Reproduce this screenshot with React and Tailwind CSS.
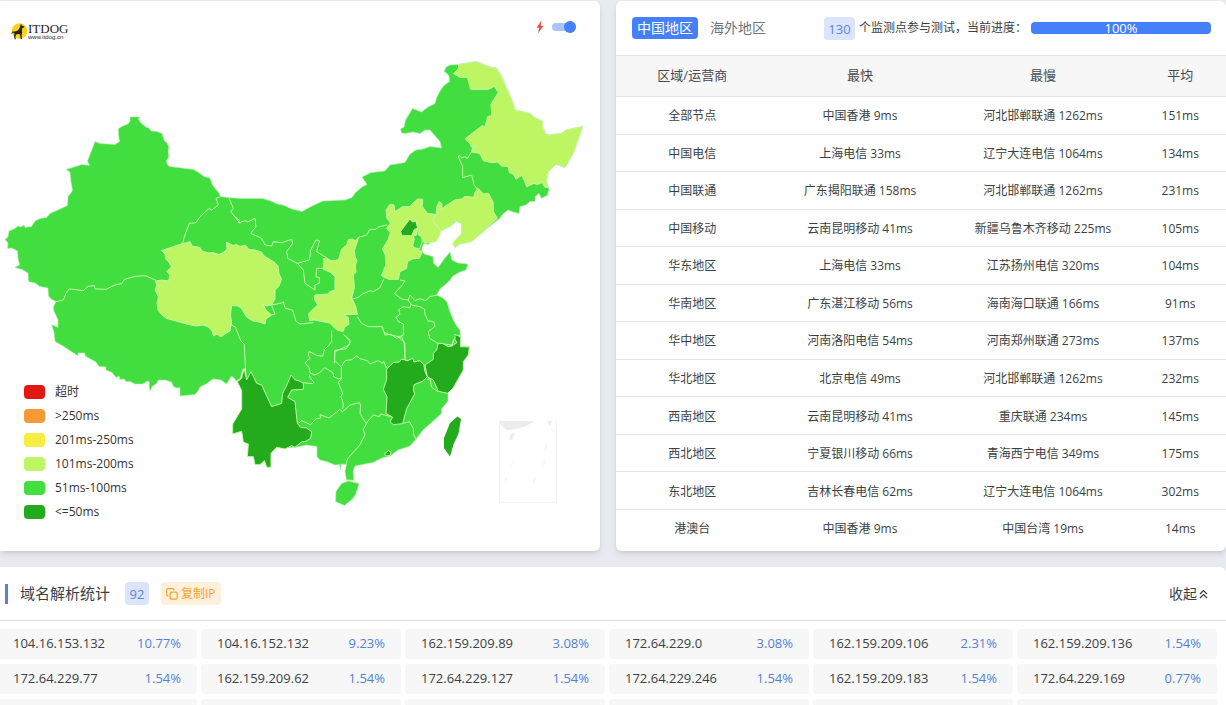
import React, { useState } from 'react'

const legend = [
    { label: "超时", box: "bg-[#e41813]" },
    { label: ">250ms", box: "bg-[#f59a36]" },
    { label: "201ms-250ms", box: "bg-[#f6ec43]" },
    { label: "101ms-200ms", box: "bg-[#bef663]" },
    { label: "51ms-100ms", box: "bg-[#42dd3f]" },
    { label: "<=50ms", box: "bg-[#24aa1d]" },
]

const regions = [
    ["全部节点", "中国香港 9ms", "河北邯郸联通 1262ms", "151ms"],
    ["中国电信", "上海电信 33ms", "辽宁大连电信 1064ms", "134ms"],
    ["中国联通", "广东揭阳联通 158ms", "河北邯郸联通 1262ms", "231ms"],
    ["中国移动", "云南昆明移动 41ms", "新疆乌鲁木齐移动 225ms", "105ms"],
    ["华东地区", "上海电信 33ms", "江苏扬州电信 320ms", "104ms"],
    ["华南地区", "广东湛江移动 56ms", "海南海口联通 166ms", "91ms"],
    ["华中地区", "河南洛阳电信 54ms", "河南郑州联通 273ms", "137ms"],
    ["华北地区", "北京电信 49ms", "河北邯郸联通 1262ms", "232ms"],
    ["西南地区", "云南昆明移动 41ms", "重庆联通 234ms", "145ms"],
    ["西北地区", "宁夏银川移动 66ms", "青海西宁电信 349ms", "175ms"],
    ["东北地区", "吉林长春电信 62ms", "辽宁大连电信 1064ms", "302ms"],
    ["港澳台", "中国香港 9ms", "中国台湾 19ms", "14ms"],
]

const ips = [
    ["104.16.153.132", "10.77%"],
    ["104.16.152.132", "9.23%"],
    ["162.159.209.89", "3.08%"],
    ["172.64.229.0", "3.08%"],
    ["162.159.209.106", "2.31%"],
    ["162.159.209.136", "1.54%"],
    ["172.64.229.77", "1.54%"],
    ["162.159.209.62", "1.54%"],
    ["172.64.229.127", "1.54%"],
    ["172.64.229.246", "1.54%"],
    ["162.159.209.183", "1.54%"],
    ["172.64.229.169", "0.77%"],
    ["", ""], ["", ""], ["", ""], ["", ""], ["", ""], ["", ""],
]

const FAST = "#24aa1d"
const GOOD = "#42dd3f"
const SLOW = "#bef663"

const Logo = () => (
    <div className="flex items-center">
        <svg viewBox="0 0 18 18" className="w-[18px] h-[18px]">
            <circle cx="9.5" cy="9" r="7.8" fill="#fbd316" />
            <path d="M11 1.500l.8 2 2.600.9-.4 1.200-1.800.3-.2 2.300.1 2.500-.5 2.500.4 3.800h-1.300l-.7-4.400-1.400-.6-2 .2-1.300 1.900.6 3.200H4.700l-.7-3.600.5-2.400-1.700-.9-.9 1.700-.6-.3 1.200-2.400 2.300.2 3.200-1.100 1.500-2.600z" fill="#26211c" />
        </svg>
        <div className="leading-none text-[#2b2623]">
            <div className="font-['Liberation_Serif',serif] text-[13px] leading-[11px]">ITDOG</div>
            <div className="font-['Liberation_Sans',sans-serif] text-[6px] leading-[6px]">www.itdog.cn</div>
        </div>
    </div>
)

const ChinaMap = () => (
    <svg viewBox="0 51 600 500" className="block w-full" stroke="#c5f8a8" strokeWidth="1" strokeLinejoin="round" fill="none">
        {/* mainland, clockwise from 阿勒泰 */}
        <path
            fill={GOOD}
            stroke="#b4f2ae"
            strokeWidth=".6"
            d="M130 117 L139.500 117 L138.500 119.500 L141 123 L146.500 127.500 L149 128 L151 131 L157 131.500 L162 133.500 L163 137 L164.500 141 L167 143 L169 147 L168 151 L169 156 L166.500 161 L167 164 L169.500 166.500 L193.500 169.500 L198 172 L204 176.500 L210 178 L212 184 L215 188.500 L219 193 L220.500 196.500
            L228 197.500 L240 198.500 L263 198.500 L272 201.500 L277 204 L283 205 L292 209 L302 211.500 L312 206 L323 201 L345 200 L352 197.500 L355 193 L362 187 L367 184.500 L362 177 L371 172.500 L380 171.500 L385 171 L390 165 L396 164 L405 162.500 L410 154 L416 150 L423 149 L430 146.500 L441.500 148 L440 141.500 L433 133.500 L430 130 L425 130 L420 133.500 L413 132 L405 133.500 L401.500 133 L400.500 129 L404 127 L405.500 120 L412.500 108.500 L421.500 112 L428 107 L435 103.500 L436.500 98 L440 91 L443.500 86 L449.500 81.500 L449 76 L446 72.500 L444 72 L446 67 L450 65 L458 64.500
            L476.500 61.500 L488 66.500 L496.500 68 L502.500 78.500 L506.500 88.500 L513 103 L515 110 L530 113.500 L534 117 L540 120 L542 121 L542 126 L545 132.500 L547.500 135 L561.500 133.500 L566 130 L573 128.500 L582.500 126.500 L580 135 L577 143 L573 153.500 L570 159 L565 167.500 L556 164.500 L548 171.500 L546.500 181 L549 189.500 L547.500 195 L541.500 198.500 L539 193.500 L535 196.500 L535 201.500 L530 201.500 L526 205 L520 206.500 L519 213.500 L513 212 L508 210 L503 214 L498.500 219.500 L495 222
            L480 234.500 L471.500 241.500 L460 244 L455 247.500 L452.500 243.500 L461.500 233.500 L461.500 223.500 L456.500 221 L450 226.500 L440 231.500 L435 240 L428 244.500 L423.500 243.500 L421.500 250 L424 254 L433 256.500 L433.500 263 L438 267.500 L445 258 L450 252 L452 260 L458 263 L468 264 L466 270 L460 272 L453 276 L450 280 L446 284 L440.500 288.500 L436.500 295 L443 298 L447 302 L450 312 L453.500 320 L456 325 L460 330
            L460.500 338 L461 346.500 L469.500 346.500 L468 355 L463.500 361.500 L463 370 L458 379 L453 388 L448 393 L448 401 L441.500 409 L441.500 413.500 L436.500 418 L423 430 L416 439 L410 446 L398 450 L390 456 L382 458 L373 462.500 L365 464 L355 466 L353 471.500 L354 480 L346.500 480.500 L345 471.500 L346.500 464.500 L341 464 L340.500 470 L339.500 464.500 L335 465 L326.500 461.500 L320 460 L317 456.500 L317 446.500 L306.500 445 L295 447.500
            L276.500 447.500 L260 440 L250 420 L246 385 L243 369 L240 379 L236 381 L235 379 L231.500 376 L229 380 L226.500 384 L221 380 L213 379 L206 384 L200 387 L198 391 L195 394.500 L180 396 L180 387.500 L177 388 L173.500 386.500 L171.500 382 L165 380 L158.500 380 L156 384 L152 386.500 L150 391 L149 386 L149.500 382 L147.500 381 L143 384 L135 384 L130 381.500 L126 381.500 L124 379 L120 379.500 L119 376 L116 377.500 L112 372.500 L106 370 L106 367 L99 366.500 L96 362 L85 356 L85 353 L78 353 L78 356 L72 352 L63 346 L55 341.500 L54 332 L51.500 325 L55 326 L58 327.500 L58 320 L53.500 310 L53.500 306.500 L56 301.500
            L51 299 L48.500 296 L48 288 L40 286.500 L35 283 L28.500 281.500 L28 273 L22 269.500 L15 267.500 L19.500 265 L18 258 L17.500 251 L12 248 L7.500 248.500 L8 243 L5 239.500 L8 237 L9 231 L14 229 L18 226 L21 227 L24 225 L25 227.500 L31.500 226.500 L35 221 L40 218.500 L46.500 217.500 L50 213.500 L60 209 L67.500 205.500 L68 196.500 L71 193 L72.500 190 L71 182 L70 172 L66 169.500 L82 164.500 L89.500 165.500 L87.500 161 L91 152 L95 141.500 L100 143.500 L115 144.500 L119.500 141.500 L118.500 135 L118.500 128.500 L123 126 L128 124 L130 121 Z"
        />

        {/* 青海 */}
        <path fill={SLOW} d="M161.500 250.500 L168 248.500 L182.500 243.500 L186 243 L190 241.500 L192 246 L200 247.500 L202 251 L208 253 L213 252.500 L219 254.500 L224 252 L227 249 L226.500 242 L233 245.500 L236 244.500 L240 246.500 L245 245 L249 249.500 L255 250 L261.500 252 L264 256 L270 259.500 L274 262 L278 266 L279 274 L281.500 279 L279 286 L275 290 L275 299 L271.500 305 L266 306 L263 303.500 L266 310 L271.500 315 L266 319 L265 324 L259 322 L253 321 L246.500 317 L241.500 308.500 L238 306 L231.500 305.500 L230.500 315 L231.500 322 L230 331 L224 334.500 L221 337 L217 334 L213.500 336 L212 331 L208.500 327 L203 325 L196 326 L186.500 324 L176 321 L166.500 318.500 L162 315 L158 310 L157 303 L158.500 297 L155 290 L157 285 L155 281 L162 280 L168.500 281 L170 275 L166.500 271.500 L171.500 267 L168 261 L165.500 259 L165 254 Z" />

        {/* north-west borders */}
        <g transform="translate(0 100) scale(.33333)" strokeWidth="3">
            <path d="M168 605l22-5 8-20 9-13 22 2 21 3 14-13 19-2 2 10 33 1 27-13 20-4 9-13 32-9 30-2 32 14" />
            <path d="M548 430l5-20 15-40 20-2 12-18 28-25 7 5 20-15-7-20 14-5M685 290l15 35-8 10 28 35" />
        </g>

        <g transform="translate(220 180) scale(.33333)" strokeWidth="3">
            {/* 甘肃 / 宁夏 */}
            <path d="M38 103l20 18-2 8 19-7 8 4 22-11 3 25-16 20 33 15 10 20 20 3 5-13 25 3 30-10 3 12-18 25 3 20 29 15 36-10 4-30 16-30 10 2-8 33 40 25M232 250l18 20 5 40 30 20v-15l13-5v-17l-10-3 2-25 22 0" />
            {/* 陕西 */}
            <path fill={SLOW} d="M416 172l-11 10-8-5-12 2-5 16-15 12-10 33-20 2-24-7-1 33 20 8 15 14v40l-16 5-4 7-40 3-2 12 10 18-10 9-17 16 3 22 14-2 46 9 20 20 20 6 5-14 13-8-2-20-14-9 41-1-5-25-12-24 8-30-3-42 8-4-2-22 5-14-6-12-2-18z" />
            {/* 河北 */}
            <path fill={SLOW} d="M510 73 L498 90 L501 115 L511 129 L500 146 L511 158 L504 180 L487 207 L496 225 L497 256 L484 287 L506 298 L535 298 L540 275 L560 265 L562 245 L580 236 L598 235 L607 216 L582 202 L590 180 L600 172 L615 190 L648 185 L660 165 L662 152 L640 125 L645 103 L622 100 L607 80 L608 58 L593 57 L577 71 L570 80 L548 80 L525 95 L522 75 Z" />
            <path fill={FAST} d="M570 117l-10 13-18 24 3 13h30l7-17 11-7-6-20-10 3z" />
            <path fill={GOOD} d="M592 150l-2 15-10 3 3 9-5 20 6 6 15 4 8-23-2-14-9-5 1-15z" />
            <path d="M416 172l24-7 10-17 18 0 7-7 26-6M395 358l20-6 12-10 13-5 10-5 10 3 20-12 12-28M155 405l10-3-8-20-2-7 30-6 5-4 5 19 23 7 10 33 12 8 40-4M30 433l15 7 18 43 10 10 2 47 3 50" />
            {/* 山东 / 江苏 / 安徽 / 河南 */}
            <path d="M540 300l15 3-10 15-22 22 22 17 20 3 5-15 15 17 14-6 18 6 12-12 23-5M565 360l10 15 25 5 14 8 0 12 11 25 5-3 12 5 3 12-20 16 4 20 25 15 42 5 8-20 16-10M565 360l8 14-3 9-20-3-14 9 4 14-12 9 8 13 14 7v34l-15 4 20 20 0 45" />
            <path d="M412 410l13 20 20 10 43 0 2 15 15 8 30 7M370 463l20 17-2 15-43 20-2 35" />
        </g>

        <g transform="translate(380 50) scale(.33333)" strokeWidth="3">
            {/* 辽宁 */}
            <path fill={SLOW} d="M178 455l-8 15-1 20-10 22 23 31 28-13 15-17 20 7v30l-27 30 7 12 15-10 35-7 25-22 52-48-12-20-1-30-14-25-15 2-16-17-9 12-4 15-26-3-10 8-20 3-32 20-6 8-2-18z" />
            {/* 黑龙江 */}
            <path fill={SLOW} d="M235 43 L290 35 L325 50 L350 55 L368 85 L380 115 L400 160 L405 180 L450 190 L462 202 L480 210 L487 213 L487 228 L495 248 L502 255 L545 250 L558 240 L580 235 L608 230 L600 255 L580 310 L555 352 L528 343 L505 365 L500 393 L503 412 L496 413 L485 398 L472 404 L462 400 L440 410 L433 392 L425 376 L408 388 L400 372 L388 368 L385 350 L365 348 L352 336 L335 338 L310 332 L299 310 L275 306 L276 298 L290 288 L275 292 L271 283 L256 266 L308 226 L313 235 L323 200 L335 196 L333 162 L355 128 L343 109 L325 118 L272 118 L262 82 L240 82 L221 71 L236 55 Z" />
            <path d="M275 305l-13 20-8-5-9 4-8-8-2 5 13 29 0 33 27-8 7 28 10 15" />
            <path d="M275 291l13-4 0 4-12 3" fill={GOOD} />
        </g>

        <g transform="translate(220 330) scale(.33333)" strokeWidth="3">
            {/* 云南 */}
            <path fill={FAST} d="M52 155l13-10 7-30 8 35 13-25 17 35 15 5 30 65 30-10 3-30 15-30 10-25 13 15 12 3 12 7v18l-35 2-12 22 22 13 7 65 10 12 18 2 15 11-3 20-17 10-10 0-20 17-10-5-20 10-25-5-17 18v42h-13l-7-20-13 12h-15l-5-24h-18l3-38-15-5-5-33-27 8v-30l27-45v-55z" />
            {/* 江西 */}
            <path fill={FAST} d="M500 117l20-19 18-2 7-9 18 5 15-7 4 11 18-4 12 13 2 17 8 18-13 13-27 11-2 14 4 14-24 44-12 45-28 3-10-9 8-13-20-12 3-50-11-22 10-30z" />
            {/* 浙江 / 上海 */}
            <path fill={FAST} d="M655 40l-5 20-10 10v18l-25 17 7 35 18 10 15 34 28 6 17-17 30-53v-25l15-20 3-24-27-1 1-29-17-8 0 16 6 9-11 7-15 5-18-10z" />
            <path d="M622 148l8-2 5 26 18 13M683 50l14-2 3-20" />
            {/* 重庆 / 贵州 / 湖南 */}
            <path d="M335 2l0 33-10 12-12 12-5 20-18-3-23-12-2 13 6 7-16 14 12 15 3 15 12 7 15-5 17-17 25 15 2 12 15 7 8-3v-33l-20-20v-30l35-5 12-20-17-20M268 133l2 10 12 14-5 4-27-3M365 145l-10 12 13 33-5 10 7 22-2 16M365 108l10-16 20-3 15-11 10 8 22 6 8 10 25-10 12 8 4-6 9 21" />
            <path d="M490 0l5 15 18-2 17 12 15-5 8 20 2 50 10 2" />
            {/* 两广 */}
            <path d="M235 280l10-8 27 12 15-17 15-3-2-10 27 10 23-18 9-7 9 6 22-20 28-7 4 7-2 25 18 30 22-25 18 5 4-8 30 8M440 280l-10 18 5 17-17 32-20 22-15 17-5 16M550 280l18-5 12 20 1 20 9 15M378 450l27 2" />
            <path fill={FAST} d="M495 370l10-8 8 5-2 8-11 3-5-2z" />
        </g>

        {/* 海南 / 台湾 */}
        <path fill={GOOD} stroke="#b4f2ae" strokeWidth=".6" d="M336 491.500l5.500-8 7-2.500 10.500 2.500-3 10-3 5-8.500 7-9-4z" />
        <path fill={FAST} stroke="none" d="M457.500 416.500l3.500 2.500-2.500 14.500-5 11-3.500 12-6-8.500v-10l6-15z" />

        {/* 南海诸岛 */}
        <g stroke="#f5f5f5">
            <path d="M499.500 420v83M556.500 420v83M499 502.500h58" />
            <path fill="#ececec" stroke="none" d="M500 421h35c-8 5-16 9-29 9l-6-6zM547 421h5l-2 5zM511 434l4-1-3 7-3-1z" />
            <path d="M546 445l-1 6M545 461l-2 4M536 478l-3 5M513 463l-2 2M506 478l0 3M552 430l1 2M522 493l1 1" strokeWidth="1.500" />
        </g>
    </svg>
)

const App = () => {
    const [fast, setFast] = useState(true)

    return (
        <div className="h-screen overflow-hidden bg-[#e7eaf0] pt-px text-[#3b3f45] font-['Open_Sans','Noto_Sans_CJK_SC',sans-serif]">
            <div className="grid grid-cols-[60fr_61fr] gap-4">
                {/* Map */}
                <div className="relative bg-white rounded-r-md shadow-md">
                    <div className="flex justify-between items-center h-[50px] pl-[10px] pr-6 pt-[10px]">
                        <Logo />
                        <label className="flex items-center gap-2 pb-2">
                            <svg viewBox="0 0 8 14" className="w-2 h-[14px]" aria-label="fast">
                                <path d="M5.500.5L.5 7.800h2.800L2 13.500l5.600-7.800H4.700z" fill="#ea4f4c" />
                            </svg>
                            <span className="relative flex items-center w-6 h-3">
                                <input
                                    type="checkbox"
                                    checked={fast}
                                    onChange={(e) => setFast(e.target.checked)}
                                    className="peer appearance-none w-6 h-2 rounded-full bg-[#a9c3fb]"
                                />
                                <span className="absolute left-0 peer-checked:left-3 w-3 h-3 rounded-full bg-[#4680f8]"></span>
                            </span>
                        </label>
                    </div>
                    <ChinaMap />
                    <ul className="absolute left-6 bottom-[27px] text-xs text-[#333]">
                        {legend.map((item) => (
                            <li key={item.label} className="flex items-center gap-[10px] h-6">
                                <span className={`w-[21px] h-[14px] rounded-sm ${item.box}`}></span>
                                {item.label}
                            </li>
                        ))}
                    </ul>
                </div>

                {/* Region stats */}
                <div className="bg-white rounded-md shadow-md">
                    <div className="flex items-center h-[54px] pl-4 pr-[15px]">
                        <button className="h-[22px] px-[5px] rounded-sm bg-[#4680f8] text-white text-sm leading-[22px]">中国地区</button>
                        <button className="ml-3 text-sm text-[#6d747b]">海外地区</button>
                        <span className="ml-[58px] h-[23px] px-1 rounded-sm bg-[#dae5fd] text-[#5b85dc] text-[13px] leading-6 w-[31px] text-center">130</span>
                        <span className="ml-1 text-xs whitespace-nowrap">个监测点参与测试，当前进度：</span>
                        <div className="ml-1 flex-1 h-3 rounded-sm bg-[#4680f8] text-white text-[13px] leading-3 text-center">100%</div>
                    </div>
                    <table className="w-full h-[491px] table-fixed text-center text-xs">
                        <thead>
                            <tr className="h-[41px] bg-[#f7f7f7] border-y border-[#e3e5e7] text-[13px] text-[#434a52]">
                                <th className="w-[25%] font-normal">区域/运营商</th>
                                <th className="w-[30%] font-normal">最快</th>
                                <th className="w-[30%] font-normal">最慢</th>
                                <th className="w-[15%] font-normal">平均</th>
                            </tr>
                        </thead>
                        <tbody>
                            {regions.map((row) => (
                                <tr key={row[0]} className="border-b border-[#e3e5e7] last:border-b-0">
                                    {row.map((cell, i) => (
                                        <td key={i} className="pt-[2px]">{cell}</td>
                                    ))}
                                </tr>
                            ))}
                        </tbody>
                    </table>
                </div>
            </div>

            {/* DNS stats */}
            <div className="mt-4 bg-white rounded-tr-md shadow-md">
                <div className="flex items-center h-[54px] pl-[5px] pr-[18px] border-b border-[#e0e2e4]">
                    <span className="w-[3px] h-5 bg-[#5580d8]"></span>
                    <h2 className="ml-3 text-[15px]">域名解析统计</h2>
                    <span className="ml-[15px] w-6 h-[23px] rounded-sm bg-[#dae5fd] text-[#5b85dc] text-[13px] leading-6 text-center">92</span>
                    <button className="ml-3 flex items-center gap-[3px] h-[23px] px-[5px] rounded-sm bg-[#fff0dc] text-[#f2a32c] text-xs">
                        <svg viewBox="0 0 12 12" className="w-3 h-3" fill="none" stroke="currentColor" strokeWidth="1.200">
                            <rect x="4.200" y="4.200" width="7" height="7" rx="1.200" />
                            <path d="M2.500 7.800H1.800A1.200 1.200 0 0 1 .7 6.600V1.800A1.200 1.200 0 0 1 1.800.7h4.800a1.200 1.200 0 0 1 1.200 1.100v.7" />
                        </svg>
                        复制IP
                    </button>
                    <button className="ml-auto flex items-center gap-[2px] text-sm">
                        收起
                        <svg viewBox="0 0 9 10" className="w-[9px] h-[10px]" fill="none" stroke="currentColor" strokeWidth="1.200">
                            <path d="M1 5l3.500-3.500L8 5M1 9l3.500-3.500L8 9" />
                        </svg>
                    </button>
                </div>
                <div className="grid grid-cols-6 gap-x-1 gap-y-[5px] pt-2 -ml-[3px] mr-[9px] text-[13px]">
                    {ips.map((item, i) => (
                        <div key={i} className="flex justify-between items-center h-[30px] px-4 rounded-sm bg-[#f7f7f7]">
                            <span>{item[0]}</span>
                            <span className="text-[#5480dc]">{item[1]}</span>
                        </div>
                    ))}
                </div>
            </div>
        </div>
    )
}

export default App
